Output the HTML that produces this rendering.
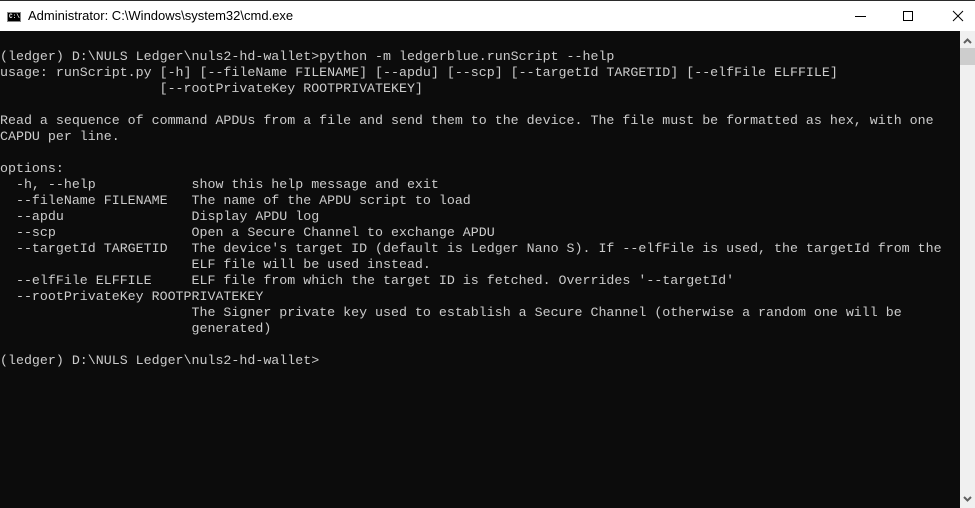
<!DOCTYPE html>
<html><head><meta charset="utf-8"><style>
*{margin:0;padding:0;box-sizing:border-box}
body{width:975px;height:508px;overflow:hidden;background:#0c0c0c;position:relative;font-family:"Liberation Sans",sans-serif}
#title{position:absolute;left:0;top:0;width:975px;height:31px;background:#fff;border-top:1px solid #2b2b2b}
#title .t{position:absolute;left:28px;top:7px;font-size:13px;color:#000;font-family:"Liberation Sans","DejaVu Sans",sans-serif}
#icon{position:absolute;left:7px;top:11px;width:14px;height:10px;background:#000;border:1px solid #888}
#icon span{position:absolute;left:1px;top:1px;font-size:6px;color:#fff;font-family:"Liberation Mono",monospace;line-height:6px;font-weight:bold}
#term{position:absolute;left:0;top:49px;font-family:"Liberation Mono",monospace;font-size:13.3px;line-height:16px;color:#cccccc;white-space:pre}
#sb{position:absolute;left:960px;top:31px;width:15px;height:477px;background:#f0f0f0}
#thumb{position:absolute;left:960px;top:48px;width:15px;height:17px;background:#cdcdcd}
</style></head><body>
<div id="title"><div id="icon"><span>C:\</span></div><div class="t">Administrator: C:\Windows\system32\cmd.exe</div>
<svg style="position:absolute;left:850px;top:8px" width="120" height="16">
<line x1="5" y1="7.5" x2="16" y2="7.5" stroke="#000" stroke-width="1"/>
<rect x="53.5" y="2.5" width="9" height="9" fill="none" stroke="#000"/>
<line x1="103" y1="2" x2="113" y2="12" stroke="#000"/><line x1="113" y1="2" x2="103" y2="12" stroke="#000"/>
</svg></div>
<div id="term">(ledger) D:\NULS Ledger\nuls2-hd-wallet>python -m ledgerblue.runScript --help
usage: runScript.py [-h] [--fileName FILENAME] [--apdu] [--scp] [--targetId TARGETID] [--elfFile ELFFILE]
                    [--rootPrivateKey ROOTPRIVATEKEY]

Read a sequence of command APDUs from a file and send them to the device. The file must be formatted as hex, with one
CAPDU per line.

options:
  -h, --help            show this help message and exit
  --fileName FILENAME   The name of the APDU script to load
  --apdu                Display APDU log
  --scp                 Open a Secure Channel to exchange APDU
  --targetId TARGETID   The device's target ID (default is Ledger Nano S). If --elfFile is used, the targetId from the
                        ELF file will be used instead.
  --elfFile ELFFILE     ELF file from which the target ID is fetched. Overrides '--targetId'
  --rootPrivateKey ROOTPRIVATEKEY
                        The Signer private key used to establish a Secure Channel (otherwise a random one will be
                        generated)

(ledger) D:\NULS Ledger\nuls2-hd-wallet></div>
<div id="sb"></div><div id="thumb"></div>
<svg style="position:absolute;left:960px;top:35px" width="15" height="12"><polyline points="4,8 7.5,4.5 11,8" fill="none" stroke="#606060" stroke-width="2"/></svg>
<svg style="position:absolute;left:960px;top:494px" width="15" height="12"><polyline points="4,3 7.5,6.5 11,3" fill="none" stroke="#606060" stroke-width="2"/></svg>
</body></html>
